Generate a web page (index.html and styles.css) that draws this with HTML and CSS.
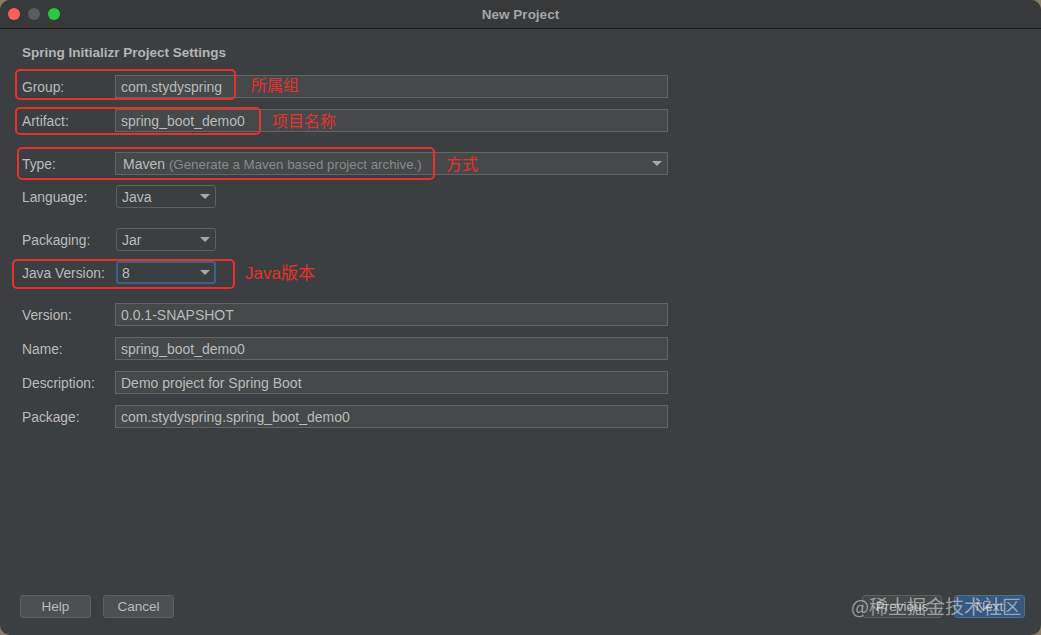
FILE: index.html
```html
<!DOCTYPE html>
<html lang="zh">
<head>
<meta charset="utf-8">
<title>New Project</title>
<link rel="stylesheet" href="styles.css">
</head>
<body>
<div class="window">
  <div class="titlebar">
    <div class="lights">
      <span class="light red"></span>
      <span class="light gray"></span>
      <span class="light green"></span>
    </div>
    <div class="title">New Project</div>
  </div>
  <div class="content">
    <h1 class="heading">Spring Initializr Project Settings</h1>
    <div class="form">
      <div class="row r-group">
        <label class="label">Group:</label>
        <div class="field">com.stydyspring</div>
        <div class="anno anno-group"></div>
        <span class="note note-group">所属组</span>
      </div>
      <div class="row r-artifact">
        <label class="label">Artifact:</label>
        <div class="field">spring_boot_demo0</div>
        <div class="anno anno-artifact"></div>
        <span class="note note-artifact">项目名称</span>
      </div>
      <div class="row r-type">
        <label class="label">Type:</label>
        <div class="field combo-wide">Maven <span class="hint">(Generate a Maven based project archive.)</span><span class="arrow"></span></div>
        <div class="anno anno-type"></div>
        <span class="note note-type">方式</span>
      </div>
      <div class="row r-lang">
        <label class="label">Language:</label>
        <div class="combo">Java<span class="arrow"></span></div>
      </div>
      <div class="row r-pack">
        <label class="label">Packaging:</label>
        <div class="combo">Jar<span class="arrow"></span></div>
      </div>
      <div class="row r-java">
        <label class="label">Java Version:</label>
        <div class="combo focused">8<span class="arrow"></span></div>
        <div class="anno anno-java"></div>
        <span class="note note-java">Java版本</span>
      </div>
      <div class="row r-version">
        <label class="label">Version:</label>
        <div class="field">0.0.1-SNAPSHOT</div>
      </div>
      <div class="row r-name">
        <label class="label">Name:</label>
        <div class="field">spring_boot_demo0</div>
      </div>
      <div class="row r-desc">
        <label class="label">Description:</label>
        <div class="field">Demo project for Spring Boot</div>
      </div>
      <div class="row r-pkg">
        <label class="label">Package:</label>
        <div class="field">com.stydyspring.spring_boot_demo0</div>
      </div>
    </div>
  </div>
  <div class="footer">
    <div class="btn-group">
      <button class="btn">Help</button>
      <button class="btn">Cancel</button>
    </div>
    <div class="btn-group">
      <button class="btn btn-prev">Previous</button>
      <button class="btn btn-next">Next</button>
    </div>
    <span class="watermark">@稀土掘金技术社区</span>
  </div>
</div>
</body>
</html>
```
FILE: styles.css
```css
html, body {
  margin: 0;
  padding: 0;
  background: #8a7d68;
}
body {
  width: 1041px;
  height: 635px;
  overflow: hidden;
  font-family: "Liberation Sans", Arial, "Noto Sans CJK SC", sans-serif;
}
.window {
  width: 1041px;
  height: 635px;
  background: #3c3f41;
  border-radius: 10px;
  overflow: hidden;
  display: flex;
  flex-direction: column;
  position: relative;
  box-sizing: border-box;
}
.titlebar {
  height: 28px;
  background: #38393b;
  border-bottom: 1px solid #1c1c1c;
  position: relative;
  display: flex;
  align-items: center;
  justify-content: center;
  flex-shrink: 0;
}
.lights {
  position: absolute;
  left: 8px;
  top: 8px;
  display: flex;
  gap: 8px;
}
.light {
  width: 12px;
  height: 12px;
  border-radius: 50%;
  display: block;
}
.light.red { background: #fe5f57; }
.light.gray { background: #5c5c5e; }
.light.green { background: #28c840; }
.title {
  color: #a5a5a5;
  font-weight: bold;
  font-size: 13.5px;
  margin-top: 1px;
}
.content {
  flex: 1;
  padding: 0 22px;
}
.heading {
  margin: 16px 0 0 0;
  font-size: 13.5px;
  font-weight: bold;
  color: #b4b4b4;
  height: 15px;
  line-height: 15px;
}
.form {
  margin-top: 15px;
  display: flex;
  flex-direction: column;
}
.row {
  display: flex;
  align-items: center;
  height: 23px;
  position: relative;
}
.r-artifact { margin-top: 11px; }
.r-type { margin-top: 20px; }
.r-lang { margin-top: 10px; }
.r-pack { margin-top: 20px; }
.r-java { margin-top: 10px; }
.r-version { margin-top: 19px; }
.r-name, .r-desc, .r-pkg { margin-top: 11px; }
.label {
  width: 93px;
  color: #bbbbbb;
  font-size: 13.8px;
  flex-shrink: 0;
  line-height: 23px;
  padding-top: 1px;
}
.field {
  width: 553px;
  height: 23px;
  box-sizing: border-box;
  background: #45494a;
  border: 1px solid #646464;
  color: #bbbbbb;
  font-size: 14px;
  line-height: 22px;
  padding-left: 5px;
  position: relative;
  white-space: nowrap;
}
.combo-wide {
  padding-left: 7px;
}
.hint {
  color: #8a8a8a;
  font-size: 13.3px;
}
.combo {
  width: 100px;
  height: 23px;
  box-sizing: border-box;
  margin-left: 1px;
  background: #3c3f41;
  border: 1px solid #5e6060;
  border-radius: 3px;
  color: #bbbbbb;
  font-size: 14px;
  line-height: 22px;
  padding-left: 5px;
  position: relative;
}
.combo.focused {
  border: 2px solid #3d6185;
  line-height: 20px;
  padding-left: 4px;
}
.arrow {
  position: absolute;
  right: 5px;
  top: 8px;
  width: 0;
  height: 0;
  border-left: 5px solid transparent;
  border-right: 5px solid transparent;
  border-top: 5px solid #a8a8a8;
}
.combo.focused .arrow {
  right: 4px;
  top: 7px;
}
.anno {
  position: absolute;
  border: 2px solid #e8302c;
  border-radius: 5px;
  box-sizing: border-box;
  pointer-events: none;
}
.anno-group { left: -7px; top: -6px; width: 221px; height: 31px; }
.anno-artifact { left: -7px; top: -2px; width: 246px; height: 28px; }
.anno-type { left: -5px; top: -5px; width: 418px; height: 33px; }
.anno-java { left: -10px; top: -2px; width: 223px; height: 30px; }
.note {
  position: absolute;
  color: #e8302c;
  font-size: 16px;
  font-family: "Noto Sans CJK SC", "Liberation Sans", sans-serif;
  line-height: 20px;
  top: 1px;
  white-space: nowrap;
}
.note-group { left: 229px; top: -1px; }
.note-artifact { left: 250px; }
.note-type { left: 424px; }
.note-java { left: 223px; top: 3px; font-size: 17px; font-family: "Liberation Sans", "Noto Sans CJK SC", sans-serif; }
.footer {
  height: 40px;
  padding: 0 16px 0 20px;
  display: flex;
  justify-content: space-between;
  align-items: flex-start;
  position: relative;
  flex-shrink: 0;
  margin-bottom: 0;
}
.btn-group {
  display: flex;
  gap: 12px;
}
.btn {
  width: 71px;
  height: 23px;
  box-sizing: border-box;
  background: #4c5052;
  border: 1px solid #5e6060;
  border-radius: 3px;
  color: #bbbbbb;
  font-family: "Liberation Sans", Arial, sans-serif;
  font-size: 13.5px;
  padding: 0;
}
.btn-prev {
  width: 80px;
  background: #45494a;
}
.btn-next {
  background: #365880;
  border-color: #4c708c;
}
.watermark {
  position: absolute;
  right: 20px;
  top: -3px;
  font-size: 19px;
  color: rgba(235, 235, 235, 0.55);
  font-family: "Noto Sans CJK SC", "Liberation Sans", sans-serif;
  white-space: nowrap;
}
```
